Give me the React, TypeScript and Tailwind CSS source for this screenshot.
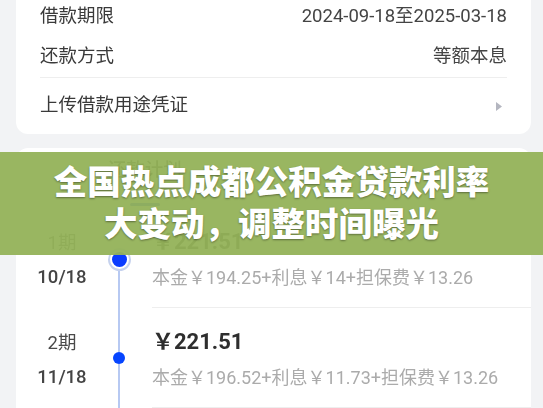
import React from "react";

const FONT = '"Roboto", "Noto Sans CJK SC", sans-serif';

const schedule = [
  {
    period: "1期",
    date: "10/18",
    amount: "￥221.51",
    detail: "本金￥194.25+利息￥14+担保费￥13.26",
    current: true,
  },
  {
    period: "2期",
    date: "11/18",
    amount: "￥221.51",
    detail: "本金￥196.52+利息￥11.73+担保费￥13.26",
    current: false,
  },
];

function InfoRow({ label, value }: { label: string; value: string }) {
  return (
    <div className="flex h-10 items-center justify-between text-[18.5px] text-[#3a3a3a]">
      <span>{label}</span>
      <span className="text-[#444]">{value}</span>
    </div>
  );
}

function TimelineItem({
  item,
  first,
}: {
  item: (typeof schedule)[number];
  first: boolean;
}) {
  return (
    <div className="flex h-[100px]">
      <div className="flex w-[92px] flex-col items-center pt-[23px] text-[18.5px] leading-6 text-[#4a4a4a]">
        <span>{item.period}</span>
        <span className="mt-[10px] font-medium text-[#444]">{item.date}</span>
      </div>
      <div className="flex w-[22px] flex-col items-center">
        {item.current ? (
          <>
            <div
              className={`h-[40px] w-[2px] ${first ? "bg-transparent" : "bg-[#b7c9f2]"}`}
            />
            <div className="flex h-[23px] w-[23px] shrink-0 items-center justify-center rounded-full border-2 border-[#c6d2ee] bg-white">
              <div className="h-[15px] w-[15px] rounded-full bg-[#0a3cff]" />
            </div>
          </>
        ) : (
          <>
            <div className="h-[44px] w-[2px] bg-[#b7c9f2]" />
            <div className="h-[12px] w-[12px] shrink-0 rounded-full bg-[#0645ff]" />
          </>
        )}
        <div className="w-[2px] flex-1 bg-[#b7c9f2]" />
      </div>
      <div className="ml-[22px] flex flex-1 flex-col border-b border-[#eeeeee] pt-[20px]">
        <span className="text-[22px] font-bold leading-7 text-[#2e2e2e]">
          {item.amount}
        </span>
        <span className="mt-[10px] text-[18px] leading-6 text-[#ababab]">
          {item.detail}
        </span>
      </div>
    </div>
  );
}

export default function App() {
  return (
    <div
      className="relative h-[408px] w-[543px] overflow-hidden bg-[#f2f3f5]"
      style={{ fontFamily: FONT }}
    >
      <div className="flex h-full flex-col pl-4 pr-3 blur-[0.4px]">
        {/* loan info card */}
        <div className="-mt-[3px] rounded-b-xl bg-white px-6">
          <InfoRow label="借款期限" value="2024-09-18至2025-03-18" />
          <InfoRow label="还款方式" value="等额本息" />
          <div className="h-px bg-[#eeeeee]" />
          <div className="flex h-[56px] items-center justify-between text-[18.5px] text-[#3a3a3a]">
            <span>上传借款用途凭证</span>
            <svg width="6" height="9" viewBox="0 0 6 9" className="mr-[5px]">
              <path d="M0 0 L6 4.5 L0 9 Z" fill="#b4b6c0" />
            </svg>
          </div>
        </div>

        {/* repayment plan card */}
        <div className="mt-[14px] flex-1 rounded-t-xl bg-white">
          <div className="flex pt-[10px]">
            <div className="flex w-1/2 flex-col items-center">
              <span className="text-[18.5px] font-medium leading-6 text-[#333]">
                还款计划
              </span>
              <div className="mt-[21px] h-[3px] w-[30px] rounded-full bg-[#1c4fff]" />
            </div>
          </div>
          <div className="mt-[2px]">
            {schedule.map((item, i) => (
              <TimelineItem key={item.period} item={item} first={i === 0} />
            ))}
          </div>
        </div>
      </div>

      {/* headline banner */}
      <div className="absolute inset-x-0 top-[152px] flex h-[103px] flex-col items-center justify-center bg-[#93b258]/95">
        <p className="text-center text-[33.5px] font-black leading-[42px] text-white [text-shadow:0_1px_2px_rgba(0,0,0,0.4)]">
          全国热点成都公积金贷款利率
          <br />
          大变动，调整时间曝光
        </p>
      </div>
    </div>
  );
}
